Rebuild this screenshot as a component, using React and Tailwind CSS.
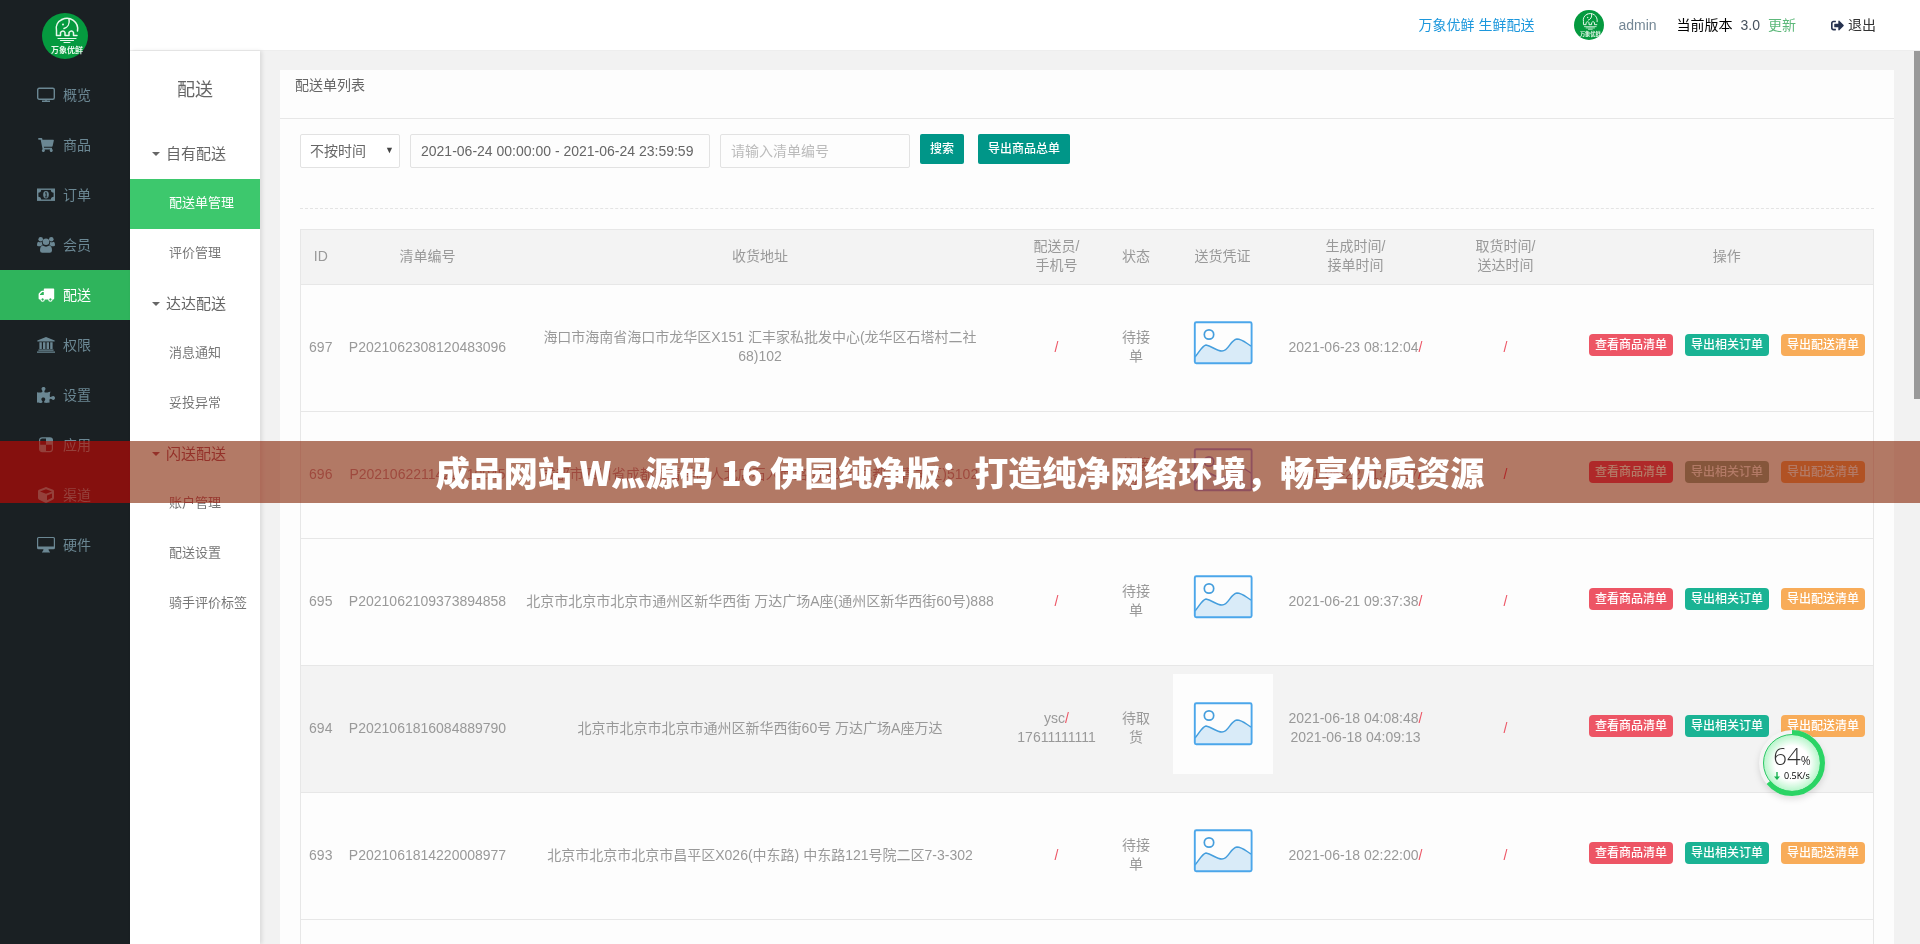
import { FaShoppingCart, FaCube, FaPuzzlePiece, FaSignOutAlt } from "react-icons/fa";

function Logo({ className }) {
  return (
    <svg viewBox="0 0 46 46" className={className} aria-hidden="true">
      <circle cx="23" cy="23" r="23" fill="#059a3f" />
      <g fill="none" stroke="#e8f8ec" strokeWidth="1.5" strokeLinecap="round" strokeLinejoin="round">
        <path d="M20 6.500C15.500 8.500 13.500 13 14.500 17.500V22.500H18.500V19.500C20 17.500 22 17.500 23 19.500V22.500H27V19.500C28.500 17.500 30.500 17.500 31.500 19.500V22.500H35" />
        <path d="M20 6.500C28 2.500 37 9 35.500 18" />
        <path d="M27 6C28 11 25.500 14.500 22 15.500" />
        <path d="M16 25.500h18M18.500 27.500h13M22 29.500h6" strokeWidth="1.200" />
      </g>
      <circle cx="21" cy="11.500" r="1" fill="#e8f8ec" />
      <text
        x="25"
        y="40"
        textAnchor="middle"
        fill="#e8f8ec"
        fontSize="8"
        fontWeight="700"
        fontFamily="'Noto Sans CJK SC', sans-serif"
      >
        万象优鲜
      </text>
    </svg>
  );
}

function ScreenIcon({ className }) {
  return (
    <svg viewBox="0 0 18 16" className={className} fill="none" stroke="currentColor" strokeWidth="1.400">
      <rect x="0.700" y="1.200" width="16.600" height="11" rx="1.500" />
      <path d="M5 14.300h8M9 12.500v2" />
    </svg>
  );
}

function CartIcon() {
  return (
    <span className="flex w-[18px] justify-center">
      <FaShoppingCart className="h-3.5 w-4" />
    </span>
  );
}

function MoneyIcon({ className }) {
  return (
    <svg viewBox="0 0 18 16" className={className} fill="none" stroke="currentColor">
      <rect x="0.700" y="2.200" width="16.600" height="11" strokeWidth="1.400" />
      <path d="M1 2.500h3.200a3.200 3.200 0 0 1-3.200 3.200zM17 2.500h-3.200a3.200 3.200 0 0 0 3.200 3.200zM1 12.900h3.200a3.200 3.200 0 0 0-3.200-3.200zM17 12.900h-3.200a3.200 3.200 0 0 1 3.200-3.200z" fill="currentColor" stroke="none" />
      <ellipse cx="9" cy="7.700" rx="2.800" ry="3.700" fill="currentColor" stroke="none" />
      <path d="M8 6.300l1.200-.8v4M7.900 9.900h2.400" stroke="#1a2023" strokeWidth="1" />
    </svg>
  );
}

function UsersIcon({ className }) {
  return (
    <svg viewBox="0 0 18 16" className={className} fill="currentColor">
      <circle cx="3.700" cy="2.300" r="2.300" />
      <circle cx="14.300" cy="2.300" r="2.300" />
      <circle cx="9" cy="4.800" r="3.300" />
      <path d="M1.300 4.700q2.200 1 3.700.2-.2 1.900.7 3.300-1.300.1-2 1.100H1.500Q0 9.300 0 8q0-2.800 1.300-3.300zM16.700 4.700q-2.200 1-3.700.2.200 1.900-.7 3.300 1.300.1 2 1.100h2.200Q18 9.300 18 8q0-2.800-1.300-3.300z" />
      <path d="M5.800 8.500Q9 10.800 12.200 8.500 15 9 15 13.500q0 2.300-2.300 2.300H5.300Q3 15.800 3 13.500 3 9 5.800 8.500z" />
    </svg>
  );
}

function TruckIcon({ className }) {
  return (
    <svg viewBox="0 0 18 16" className={className} fill="currentColor" fillRule="evenodd">
      <path d="M7.500 1.500h9q.7 0 .7.700v9.300q0 1-1.200 1h-.4a2.200 2.200 0 0 1-4.400 0H7.800a2.200 2.200 0 0 1-4.400 0h-.6q-1.200 0-1.200-1V7.200q0-.5.400-.9l2.200-2.200q.4-.4 1-.4h1.600V2.200q0-.7.700-.7zM6.800 5H5.300L3 7.300V8h3.800z" />
      <path d="M5.600 11.300a1.200 1.200 0 1 0 .01 0zM13.400 11.300a1.200 1.200 0 1 0 .01 0z" fill="#2fb45c" />
    </svg>
  );
}

function BankIcon({ className }) {
  return (
    <svg viewBox="0 0 18 16" className={className} fill="currentColor">
      <path d="M9 0l8.700 3.400v1.200H.3V3.400zM2.400 5.300h2.400v6.800H2.400zM6 5.300h2.400v6.800H6zM9.600 5.300H12v6.800H9.600zM13.200 5.300h2.400v6.800h-2.400zM1.400 12.600h15.200v1.200H1.400zM0 14.400h18v1.300H0z" />
    </svg>
  );
}

function AppIcon({ className }) {
  return (
    <svg viewBox="0 0 18 16" className={className}>
      <rect x="2.600" y="0.800" width="12.800" height="13.800" rx="2.500" fill="none" stroke="currentColor" strokeWidth="1.200" />
      <path d="M9 1h4.500q2 0 2 2v4.700H9zM3 7.700h6v6.800H5q-2 0-2-2z" fill="currentColor" />
    </svg>
  );
}

function DesktopIcon({ className }) {
  return (
    <svg viewBox="0 0 18 16" className={className} fill="currentColor">
      <path fillRule="evenodd" d="M1.500 0h15Q18 0 18 1.500v9.300q0 1.500-1.500 1.500h-5l.6 2.200h.9v1H5v-1h.9l.6-2.200h-5Q0 12.300 0 10.800V1.500Q0 0 1.500 0zm-.3 9.500h15.600v-8q0-.4-.4-.4H1.600q-.4 0-.4.400z" />
    </svg>
  );
}

function PictureIcon() {
  return (
    <svg viewBox="0 0 100 100" className="block size-[100px]" role="img" aria-label="送货凭证">
      <rect width="100" height="100" fill="#fdfdfd" />
      <path d="M22 64C27 58 29 53 33 52C39 53 43 58 49 58C56 58 57 47 64 46C69 46 73 50 78 53V70H22z" fill="#d9ebf8" />
      <path d="M22 64C27 58 29 53 33 52C39 53 43 58 49 58C56 58 57 47 64 46C69 46 73 50 78 53" fill="none" stroke="#459edd" strokeWidth="1.500" />
      <circle cx="36" cy="41.500" r="4.700" fill="none" stroke="#459edd" strokeWidth="1.700" />
      <rect x="21.800" y="29.300" width="56.800" height="41" rx="1.500" fill="none" stroke="#4ba6ea" strokeWidth="1.900" />
    </svg>
  );
}

const menu = [
  { label: "概览", icon: ScreenIcon },
  { label: "商品", icon: CartIcon },
  { label: "订单", icon: MoneyIcon },
  { label: "会员", icon: UsersIcon },
  { label: "配送", icon: TruckIcon, active: true },
  { label: "权限", icon: BankIcon },
  { label: "设置", icon: FaPuzzlePiece },
  { label: "应用", icon: AppIcon },
  { label: "渠道", icon: FaCube },
  { label: "硬件", icon: DesktopIcon },
];

const groups = [
  { title: "自有配送", items: ["配送单管理", "评价管理"] },
  { title: "达达配送", items: ["消息通知", "妥投异常"] },
  { title: "闪送配送", items: ["账户管理", "配送设置", "骑手评价标签"] },
];

const rows = [
  {
    id: 697,
    no: "P2021062308120483096",
    address: "海口市海南省海口市龙华区X151 汇丰家私批发中心(龙华区石塔村二社68)102",
    status: "待接单",
    created: "2021-06-23 08:12:04",
  },
  {
    id: 696,
    no: "P2021062211422710045",
    address: "成都市四川省成都市青羊区人北店石人南路 成都市(成都市青羊区)5102",
    status: "待接单",
    created: "2021-06-22 11:42:27",
  },
  {
    id: 695,
    no: "P2021062109373894858",
    address: "北京市北京市北京市通州区新华西街 万达广场A座(通州区新华西街60号)888",
    status: "待接单",
    created: "2021-06-21 09:37:38",
  },
  {
    id: 694,
    no: "P2021061816084889790",
    address: "北京市北京市北京市通州区新华西街60号 万达广场A座万达",
    courier: "ysc",
    phone: "17611111111",
    status: "待取货",
    created: "2021-06-18 04:08:48",
    accepted: "2021-06-18 04:09:13",
    hover: true,
  },
  {
    id: 693,
    no: "P2021061814220008977",
    address: "北京市北京市北京市昌平区X026(中东路) 中东路121号院二区7-3-302",
    status: "待接单",
    created: "2021-06-18 02:22:00",
  },
  {
    id: 692,
    no: "P2021061711052316420",
    address: "北京市北京市北京市通州区新华西街60号 万达广场A座万达",
    status: "待接单",
    created: "2021-06-17 11:05:23",
  },
];

function Slash() {
  return <span className="text-[#ed5565]">/</span>;
}

function Sidebar() {
  return (
    <nav className="w-[130px] shrink-0 bg-[#1a2023]">
      <div className="flex h-[70px] justify-center pt-[13px]">
        <Logo className="size-[46px]" />
      </div>
      {menu.map(({ label, icon: Icon, active }) => (
        <a
          key={label}
          href="#"
          className={
            active
              ? "flex h-[50px] items-center gap-2 bg-[#2fb45c] pl-[37px] text-white"
              : "flex h-[50px] items-center gap-2 pl-[37px] text-[#6b8793]"
          }
        >
          <Icon className="h-4 w-[18px]" />
          {label}
        </a>
      ))}
    </nav>
  );
}

function SubNav() {
  return (
    <nav className="z-10 w-[130px] shrink-0 bg-white shadow-[2px_0_4px_rgba(0,0,0,0.1)]">
      <h2 className="flex h-[78px] items-center justify-center text-lg text-[#666]">配送</h2>
      {groups.map((group) => (
        <div key={group.title}>
          <button type="button" className="flex h-[50px] w-full items-center gap-1.5 pl-[22px] text-[15px] text-[#666]">
            <svg viewBox="0 0 8 4" className="h-1 w-2" fill="currentColor">
              <path d="M0 0h8L4 4z" />
            </svg>
            {group.title}
          </button>
          {group.items.map((item) => (
            <a
              key={item}
              href="#"
              className={
                item === "配送单管理"
                  ? "flex h-[50px] items-center bg-[#3dc86d] pb-0.5 pl-[39px] text-[13px] text-white"
                  : "flex h-[50px] items-center pb-0.5 pl-[39px] text-[13px] text-[#777]"
              }
            >
              {item}
            </a>
          ))}
        </div>
      ))}
    </nav>
  );
}

function Header() {
  return (
    <header className="flex h-[51px] shrink-0 items-center justify-end border-b border-[#eee] bg-white pr-11">
      <a href="#" className="mr-10 text-[#1c97dc]">万象优鲜 生鲜配送</a>
      <Logo className="mr-3.5 size-[30px]" />
      <span className="mr-5 text-[#748795]">admin</span>
      <span className="mr-2 text-black">当前版本</span>
      <span className="mr-2 text-[#46525e]">3.0</span>
      <a href="#" className="mr-[35px] text-[#5db87a]">更新</a>
      <a href="#" className="flex items-center gap-1 text-[#333]">
        <FaSignOutAlt className="size-[13px] text-[#26324f]" />
        退出
      </a>
    </header>
  );
}

function Filters() {
  return (
    <form className="flex items-start border-b border-dashed border-[#e4e4e4] pb-10">
      <div className="relative mr-2.5">
        <select
          aria-label="时间类型"
          className="h-[34px] w-[100px] appearance-none rounded-xs border border-[#e2e2e2] bg-white pl-[9px] text-[#666]"
        >
          <option>不按时间</option>
        </select>
        <span className="pointer-events-none absolute top-2.5 right-1.5 text-[9px] text-[#444]">▼</span>
      </div>
      <input
        aria-label="时间范围"
        defaultValue="2021-06-24 00:00:00 - 2021-06-24 23:59:59"
        className="mr-2.5 h-[34px] w-[300px] rounded-xs border border-[#e2e2e2] px-2.5 text-[#666]"
      />
      <input
        aria-label="清单编号"
        placeholder="请输入清单编号"
        className="mr-2.5 h-[34px] w-[190px] rounded-xs border border-[#e2e2e2] px-2.5 placeholder:text-[#bbb]"
      />
      <button type="button" className="mr-3.5 h-[30px] rounded-xs bg-[#009688] px-2.5 text-xs font-medium text-white">
        搜索
      </button>
      <button type="button" className="h-[30px] rounded-xs bg-[#009688] px-2.5 text-xs font-medium text-white">
        导出商品总单
      </button>
    </form>
  );
}

function DeliveryTable() {
  return (
    <table className="mt-5 w-full table-fixed border-collapse border border-[#e7e7e7] text-center leading-[19px] text-[#999]">
      <colgroup>
        <col className="w-10" />
        <col className="w-[174px]" />
        <col />
        <col className="w-[102px]" />
        <col className="w-[57px]" />
        <col className="w-[116px]" />
        <col className="w-[150px]" />
        <col className="w-[150px]" />
        <col className="w-[293px]" />
      </colgroup>
      <thead>
        <tr className="h-[55px] border-b border-[#e7e7e7] bg-[#f3f3f3] *:pb-0.5 *:font-normal">
          <th>ID</th>
          <th>清单编号</th>
          <th>收货地址</th>
          <th>配送员/<br />手机号</th>
          <th>状态</th>
          <th>送货凭证</th>
          <th>生成时间/<br />接单时间</th>
          <th>取货时间/<br />送达时间</th>
          <th>操作</th>
        </tr>
      </thead>
      <tbody>
        {rows.map((row) => (
          <tr
            key={row.id}
            className={row.hover ? "border-b border-[#e7e7e7] bg-[#f3f3f3]" : "border-b border-[#e7e7e7]"}
          >
            <td className="pb-0.5">{row.id}</td>
            <td className="pb-0.5">{row.no}</td>
            <td className="px-2 pb-0.5">{row.address}</td>
            <td className="pb-0.5">
              {row.courier}
              <Slash />
              {row.phone && <br />}
              {row.phone}
            </td>
            <td className="px-2 pb-0.5">{row.status}</td>
            <td className="px-2 pt-2 pb-[18px]">
              <PictureIcon />
            </td>
            <td className="pb-0.5">
              {row.created}
              <Slash />
              {row.accepted && <br />}
              {row.accepted}
            </td>
            <td className="pb-0.5">
              <Slash />
            </td>
            <td className="pr-2 pb-1.5">
              <div className="flex justify-end gap-3 text-xs font-medium whitespace-nowrap text-white">
                <button type="button" className="h-[22px] rounded-sm bg-[#ed5565] px-1.5">查看商品清单</button>
                <button type="button" className="h-[22px] rounded-sm bg-[#1ab394] px-1.5">导出相关订单</button>
                <button type="button" className="h-[22px] rounded-sm bg-[#f8ac59] px-1.5">导出配送清单</button>
              </div>
            </td>
          </tr>
        ))}
      </tbody>
    </table>
  );
}

// the tint layers have to stay siblings of the page, a stacking context around them stops the blending
function Banner() {
  return (
    <>
      <div className="absolute inset-x-0 top-[441px] z-40 h-[62px] bg-[#667a66] mix-blend-multiply" />
      <div className="absolute inset-x-0 top-[441px] z-40 h-[62px] bg-[#800000] mix-blend-screen" />
      <p className="absolute inset-x-0 top-[441px] z-50 text-center font-['Noto_Sans_CJK_SC',sans-serif] text-[34px] leading-[62px] font-black text-white">
        成品网站 W灬源码 16 伊园纯净版：打造纯净网络环境，畅享优质资源
      </p>
    </>
  );
}

function SpeedBall() {
  return (
    <div className="absolute right-[94px] bottom-[147px] z-30 size-[68px]">
      <svg viewBox="0 0 68 68" className="absolute inset-0 drop-shadow-md" aria-hidden="true">
        <defs>
          <radialGradient id="ball">
            <stop offset="0.600" stopColor="#fff" />
            <stop offset="1" stopColor="#b4f5c8" />
          </radialGradient>
        </defs>
        <circle cx="34" cy="34" r="33" fill="#f4f4f4" />
        <circle cx="34" cy="34" r="28.500" fill="url(#ball)" stroke="#2cc866" strokeWidth="1" />
        <circle
          cx="34"
          cy="34"
          r="30.500"
          fill="none"
          stroke="#2bd465"
          strokeWidth="5"
          pathLength="100"
          strokeDasharray="64 100"
          transform="rotate(-90 34 34)"
        />
      </svg>
      <div className="relative pt-3.5 text-center font-['Open_Sans',sans-serif] text-[#333]">
        <div className="text-2xl leading-[26px] font-light">
          64<span className="text-xs font-normal">%</span>
        </div>
        <div className="flex items-center justify-center gap-1 text-[9px] leading-[14px] text-black">
          <svg viewBox="0 0 6 8" className="h-2 w-1.5" fill="#19b352">
            <path d="M2.300 0h1.400v4.500H6L3 8 0 4.500h2.300z" />
          </svg>
          0.5K/s
        </div>
      </div>
    </div>
  );
}

export default function App() {
  return (
    <div className="relative flex h-screen overflow-hidden bg-[#f2f2f2] font-['Liberation_Sans','Noto_Sans_CJK_SC',sans-serif] text-sm">
      <Sidebar />
      <div className="flex min-w-0 flex-1 flex-col">
        <Header />
        <div className="flex min-h-0 flex-1">
          <SubNav />
          <main className="min-w-0 flex-1 overflow-y-auto px-5 pt-[19px] [scrollbar-width:none]">
            <section className="bg-[#fdfdfd]">
              <h1 className="h-[49px] border-b border-[#e7e7e7] px-[15px] pt-[5px] text-[#666]">配送单列表</h1>
              <div className="px-5 pt-[15px]">
                <Filters />
                <DeliveryTable />
              </div>
            </section>
          </main>
          <div className="w-1.5 shrink-0">
            <div className="h-[348px] bg-[#999]" />
          </div>
        </div>
      </div>
      <SpeedBall />
      <Banner />
    </div>
  );
}
